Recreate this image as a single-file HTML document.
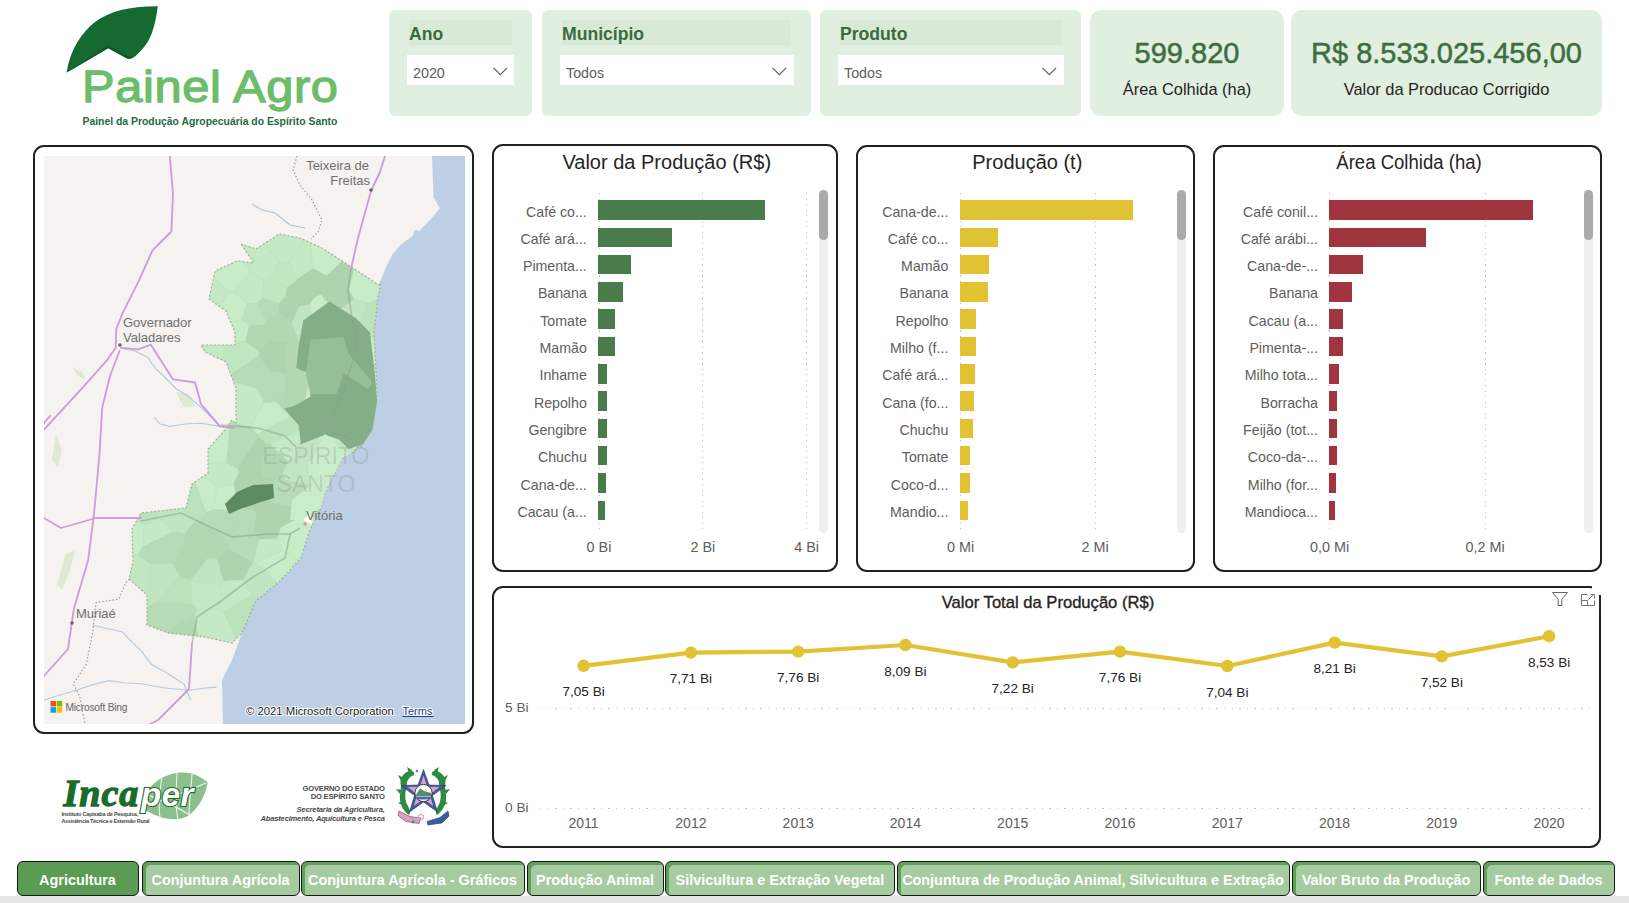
<!DOCTYPE html>
<html><head><meta charset="utf-8">
<style>
*{box-sizing:border-box;margin:0;padding:0}
html,body{width:1629px;height:903px;overflow:hidden;background:#fff}
body{font-family:"Liberation Sans",sans-serif;position:relative;color:#252423}
.a{position:absolute}
.t{position:absolute;white-space:nowrap;line-height:1}
.card{position:absolute;background:#e1efe0;border-radius:6px}
.hdr{position:absolute;background:#d8ead6}
.dd{position:absolute;background:#fff}
.ttl{font-weight:700;color:#3b6a3f;font-size:17.6px}
.ddt{color:#605e5c;font-size:14.3px}
.kpi{position:absolute;background:#e0efdf;border-radius:11px}
.kv{color:#3e6e40;font-size:29px;-webkit-text-stroke:0.5px #3e6e40}
.kl{color:#252423;font-size:16.4px}
.vis{position:absolute;border:2px solid #202020;border-radius:11px;background:#fff}
.lbl{color:#605e5c;font-size:14.2px;text-align:right}
.ax{color:#605e5c;font-size:13.6px;text-align:center}
.bt{color:#252423;font-size:20px}
.tab{position:absolute;top:861px;height:35px;border:1.6px solid #141c14;border-radius:6px;background:#a7cba0;box-shadow:inset 3px 3px 0 0 #5f9f5a;color:#fff;font-weight:700;font-size:14.4px;text-align:center;line-height:37px;white-space:nowrap;overflow:hidden}
.tab.on{background:#5a9c53;box-shadow:none}
</style></head>
<body>
<!-- ========== LOGO ========== -->
<svg class="a" style="left:0;top:0" width="350" height="140" viewBox="0 0 350 140">
  <path d="M66.5,72.7 C70,50 82,32 95,22 C110,11 130,6 157.8,6.2 C155,28 150,42 141,50.5 C136,56 132,60 127,58.5 L108.2,48.3 Z" fill="#156a31"/>
  <path d="M66.5,72.7 L108.2,44.8 L131,57.5 C130,59.5 129,59.5 127,58.5 L108.2,48.3 Z" fill="#0e5726" opacity="0.8"/>
</svg>
<div class="t" id="logoT" style="left:82.3px;top:63.5px;font-size:45px;color:#6cbd6a;-webkit-text-stroke:1.3px #6cbd6a;letter-spacing:0.6px;transform:scaleX(1.084);transform-origin:left">Painel Agro</div>
<div class="t" id="logoS" style="left:82.5px;top:117px;font-size:10.4px;font-weight:700;color:#236b3e">Painel da Produção Agropecuária do Espírito Santo</div>

<!-- ========== SLICERS ========== -->
<div class="card" style="left:389px;top:10px;width:143px;height:106px"></div>
<div class="hdr" style="left:409px;top:20px;width:103px;height:25px"></div>
<div class="t ttl" id="s1t" style="left:409px;top:26px">Ano</div>
<div class="dd" style="left:407px;top:55px;width:107px;height:30px"></div>
<div class="t ddt" id="s1v" style="left:413px;top:66px">2020</div>
<svg class="a" style="left:493px;top:67px" width="15" height="9"><path d="M0.5,0.8 L7.3,7.6 L14.1,0.8" fill="none" stroke="#605e5c" stroke-width="1.2"/></svg>

<div class="card" style="left:542px;top:10px;width:269px;height:106px"></div>
<div class="hdr" style="left:562px;top:20px;width:229px;height:25px"></div>
<div class="t ttl" id="s2t" style="left:562px;top:26px">Município</div>
<div class="dd" style="left:560px;top:55px;width:234px;height:30px"></div>
<div class="t ddt" id="s2v" style="left:566px;top:66px">Todos</div>
<svg class="a" style="left:772px;top:67px" width="15" height="9"><path d="M0.5,0.8 L7.3,7.6 L14.1,0.8" fill="none" stroke="#605e5c" stroke-width="1.2"/></svg>

<div class="card" style="left:820px;top:10px;width:261px;height:106px"></div>
<div class="hdr" style="left:840px;top:20px;width:221px;height:25px"></div>
<div class="t ttl" id="s3t" style="left:840px;top:26px">Produto</div>
<div class="dd" style="left:838px;top:55px;width:226px;height:30px"></div>
<div class="t ddt" id="s3v" style="left:844px;top:66px">Todos</div>
<svg class="a" style="left:1042px;top:67px" width="15" height="9"><path d="M0.5,0.8 L7.3,7.6 L14.1,0.8" fill="none" stroke="#605e5c" stroke-width="1.2"/></svg>

<!-- ========== KPIs ========== -->
<div class="kpi" style="left:1090px;top:10px;width:194px;height:106px"></div>
<div class="t kv" id="k1v" style="left:1090px;width:194px;text-align:center;top:39px">599.820</div>
<div class="t kl" id="k1l" style="left:1090px;width:194px;text-align:center;top:80.5px">Área Colhida (ha)</div>
<div class="kpi" style="left:1291px;top:10px;width:311px;height:106px"></div>
<div class="t kv" id="k2v" style="left:1291px;width:311px;text-align:center;top:39px">R$ 8.533.025.456,00</div>
<div class="t kl" id="k2l" style="left:1291px;width:311px;text-align:center;top:80.5px">Valor da Producao Corrigido</div>

<!-- ========== MAP ========== -->
<div class="vis" style="left:33px;top:145px;width:441px;height:589px"></div>
<svg class="a" style="left:44px;top:156px" width="421" height="568" viewBox="44 156 421 568">
  <rect x="44" y="156" width="421" height="568" fill="#f5f2ef"/>
  <!-- small vegetation patches -->
  <path d="M72,367 L82,372 L86,380 L78,376 Z" fill="#dfe8d2"/>
  <path d="M176,392 L188,394 L195,406 L184,407 Z" fill="#dfe8d2"/>
  <path d="M56,434 L62,450 L58,468 L52,460 Z" fill="#dfe8d2"/>
  <path d="M66,553 L75,551 L70,570 L62,590 L57,585 Z" fill="#dfe8d2"/>
  <!-- sea -->
  <path d="M432,156 L433.6,197.4 L440,208.6 L428.8,221.3 L419.3,230.9 L414.5,230.1 L412.9,235.7 L400.1,245.3 L392.2,254.8 L385.8,267.6 L381,280.3 L377.8,300 L374,332 L377,392 L373,424 L363,442 L350,455 L343,457 L325,492 L321,508 L309,532 L301,558 L279,582 L256,601 L242,633 L232,660 L222,680 L223,724 L465,724 L465,156 Z" fill="#bdcfe4"/>
  <!-- rivers -->
  <path d="M252,204 L262,210 L275,213 L290,225 L305,228" fill="none" stroke="#a9c3e0" stroke-width="1.2"/>
  <path d="M122.6,348.5 L135,351 L147.8,357.2 L155,368 L163.5,376 L176,388.7 L188,396 L201.2,407.6 L212,418 L220,426.4" fill="none" stroke="#b4c8e0" stroke-width="1.1"/>
  <path d="M154,417 L160,424 L169.8,426.4 L185,424 L201.2,423.3 L220,426.4" fill="none" stroke="#b4c8e0" stroke-width="1.1"/>
  <path d="M92.8,625.2 L105,628 L122.1,631.8 L132,642 L141.6,651.3 L151.4,664.3 L165,672 L183.9,683.8 L190.4,700" fill="none" stroke="#b4c8e0" stroke-width="1.1"/>
  <path d="M44,700 L60,695 L76.5,690.3 L95,684 L109.1,680.6 L125,683 L141.6,683.8 L165,688 L190.4,690.3 L205,688 L216.5,687.1" fill="none" stroke="#b4c8e0" stroke-width="1.1"/>
  <!-- state borders dotted (outside ES) -->
  <path d="M297,156 L293,170 L300,185 L312,200 L322,220 L318,232 L311,239" fill="none" stroke="#a39b93" stroke-width="1.2" stroke-dasharray="1.5 2"/>
  <path d="M129.5,579 L125.4,583 L118.8,599.2 L96.1,602.5 L92.8,631.8 L86.3,664.3 L73.3,683.8 L79.8,696.8 L85,724" fill="none" stroke="#a39b93" stroke-width="1.2" stroke-dasharray="1.5 2"/>
  <!-- ES state -->
  <path d="M241,244 L256,249 L279,234 L300,238 L322,248 L379,285 L381,281 L377.8,300 L374,332 L377,392 L373,424 L363,442 L350,455 L343,457 L325,492 L321,508 L309,532 L301,558 L279,582 L256,601 L242,633 L232,643 L205,637 L168,633 L147,625 L147,595 L129,579 L133,561 L132,529 L141,513 L186,508 L192,484 L208,473 L208,449 L224,431 L232,420 L236,424 L236,388 L226,362 L205,352 L201,345 L235,345 L235,332 L226,311 L209,299 L215,271 L237,261 L254,263 Z" fill="#c3e8c3"/>
  <!-- medium municipalities -->
  <g stroke="#a9cca9" stroke-width="0.5" stroke-opacity="0.25">
<path d="M331.4,343.6 L336.8,342.8 L342.8,331.8 L335.5,314.7 L313.5,321.9 L308.8,331.9 L331.4,343.6Z" fill="#bce2bc"/>
<path d="M190.6,581.5 L192.4,604.0 L197.0,609.6 L219.6,608.6 L221.0,584.4 L190.6,581.5Z" fill="#c4e9c4"/>
<path d="M316.9,433.9 L335.3,434.9 L345.9,409.5 L345.4,409.1 L327.3,406.6 L314.7,432.0 L316.9,433.9Z" fill="#bce2bc"/>
<path d="M224.2,345.0 L201.0,345.0 L205.0,352.0 L222.5,360.3 L224.2,345.0Z" fill="#c4e9c4"/>
<path d="M255.0,476.8 L261.6,475.8 L265.9,442.9 L257.9,436.3 L237.6,468.5 L239.2,471.8 L255.0,476.8Z" fill="#aed4ae"/>
<path d="M304.3,240.0 L300.0,238.0 L279.0,234.0 L266.9,241.9 L266.3,246.4 L279.0,262.5 L289.3,262.9 L304.3,240.0Z" fill="#c4e9c4"/>
<path d="M235.8,639.2 L242.0,633.0 L256.0,601.0 L259.8,597.8 L251.8,594.7 L223.7,612.3 L235.8,639.2Z" fill="#bce2bc"/>
<path d="M269.2,443.9 L287.6,461.1 L297.3,456.9 L301.4,431.9 L299.5,430.3 L269.2,443.9Z" fill="#c4e9c4"/>
<path d="M249.0,325.3 L245.3,341.5 L258.8,351.5 L270.6,340.0 L264.1,324.8 L249.0,325.3Z" fill="#b2d8b2"/>
<path d="M296.3,335.7 L308.8,331.9 L313.5,321.9 L309.3,304.3 L299.3,306.3 L291.6,322.3 L296.3,335.7Z" fill="#c0e5c0"/>
<path d="M354.1,298.9 L349.1,290.0 L326.9,286.7 L321.3,295.1 L335.7,312.8 L354.1,298.9Z" fill="#aed4ae"/>
<path d="M255.6,562.2 L253.2,561.4 L253.2,561.4 L242.7,579.8 L251.8,594.7 L259.8,597.8 L277.9,582.9 L255.6,562.2Z" fill="#c0e5c0"/>
<path d="M302.1,516.0 L280.8,527.2 L276.8,538.4 L283.0,550.6 L298.6,560.6 L301.0,558.0 L309.0,532.0 L316.1,517.7 L302.1,516.0Z" fill="#c8ebc8"/>
<path d="M216.9,487.9 L233.7,483.8 L239.2,471.8 L237.6,468.5 L226.2,462.2 L208.0,463.0 L208.0,473.0 L204.3,475.6 L216.9,487.9Z" fill="#c4e9c4"/>
<path d="M228.5,291.8 L213.5,278.1 L209.0,299.0 L220.1,306.9 L228.5,291.8Z" fill="#c4e9c4"/>
<path d="M326.0,405.5 L327.3,406.6 L345.4,409.1 L348.1,388.1 L335.0,375.3 L331.7,375.9 L325.5,382.9 L326.0,405.5Z" fill="#c0e5c0"/>
<path d="M282.0,476.7 L273.3,479.5 L270.1,502.4 L290.8,506.5 L286.2,480.2 L282.0,476.7Z" fill="#b6dbb6"/>
<path d="M299.3,306.3 L309.3,304.3 L315.7,296.3 L297.0,279.9 L286.6,287.9 L285.9,296.0 L299.3,306.3Z" fill="#aed4ae"/>
<path d="M241.9,319.6 L230.7,322.0 L235.0,332.0 L235.0,342.5 L245.3,341.5 L249.0,325.3 L241.9,319.6Z" fill="#c8ebc8"/>
<path d="M228.5,291.8 L234.3,291.1 L250.0,272.5 L248.6,266.7 L240.9,261.5 L237.0,261.0 L215.0,271.0 L213.5,278.1 L228.5,291.8Z" fill="#c8ebc8"/>
<path d="M367.3,303.1 L358.7,328.5 L374.4,339.5 L374.0,332.0 L377.8,300.0 L377.8,299.7 L367.3,303.1Z" fill="#bce2bc"/>
<path d="M286.4,371.5 L303.3,371.1 L311.5,362.1 L296.0,336.2 L286.8,341.9 L286.4,371.5Z" fill="#b2d8b2"/>
<path d="M149.5,605.8 L156.5,602.6 L179.4,575.8 L172.8,563.4 L150.0,563.9 L149.5,605.8Z" fill="#c0e5c0"/>
<path d="M285.9,296.0 L286.6,287.9 L268.9,279.1 L263.4,280.0 L262.0,298.1 L279.0,303.3 L285.9,296.0Z" fill="#c1e7c1"/>
<path d="M156.5,602.6 L149.5,605.8 L147.0,608.7 L147.0,625.0 L164.9,631.8 L194.2,615.4 L197.0,609.6 L192.4,604.0 L156.5,602.6Z" fill="#b6dbb6"/>
<path d="M262.0,298.1 L256.9,303.2 L265.6,321.0 L278.3,313.4 L279.0,303.3 L262.0,298.1Z" fill="#b6dbb6"/>
<path d="M276.2,402.1 L285.8,387.8 L284.5,373.1 L271.8,372.1 L256.5,388.3 L264.1,402.6 L276.2,402.1Z" fill="#b6dbb6"/>
<path d="M200.1,519.4 L193.6,522.3 L184.5,534.1 L185.2,539.7 L208.0,557.9 L217.4,559.0 L228.1,549.1 L228.4,542.3 L200.1,519.4Z" fill="#b2d8b2"/>
<path d="M226.2,462.2 L237.6,468.5 L257.9,436.3 L257.1,434.3 L250.5,426.6 L236.0,423.5 L236.0,424.0 L235.3,423.3 L230.4,422.2 L230.3,422.3 L226.2,462.2Z" fill="#b6dbb6"/>
<path d="M375.9,369.6 L375.7,365.7 L346.6,357.6 L335.0,375.3 L348.1,388.1 L375.9,369.6Z" fill="#c0e5c0"/>
<path d="M258.1,511.6 L280.8,527.2 L302.1,516.0 L290.8,506.5 L270.1,502.4 L258.1,511.6Z" fill="#aed4ae"/>
<path d="M226.2,462.2 L230.3,422.3 L224.0,431.0 L208.0,449.0 L208.0,463.0 L226.2,462.2Z" fill="#c8ebc8"/>
<path d="M228.1,549.1 L217.4,559.0 L223.0,581.3 L242.7,579.8 L253.2,561.4 L228.1,549.1Z" fill="#aed4ae"/>
<path d="M336.0,463.8 L340.3,442.1 L335.3,434.9 L316.9,433.9 L322.4,457.6 L336.0,463.8Z" fill="#c4e9c4"/>
<path d="M365.4,435.3 L366.4,435.9 L373.0,424.0 L376.0,400.2 L347.7,410.2 L365.4,435.3Z" fill="#c8ebc8"/>
<path d="M308.9,484.9 L323.3,499.0 L325.0,492.0 L338.0,466.7 L336.0,463.8 L322.4,457.6 L307.2,461.2 L308.9,484.9Z" fill="#c8ebc8"/>
<path d="M221.0,584.4 L219.6,608.6 L223.7,612.3 L251.8,594.7 L242.7,579.8 L223.0,581.3 L221.0,584.4Z" fill="#c4e9c4"/>
<path d="M172.8,563.4 L179.4,575.8 L190.1,580.8 L208.0,557.9 L185.2,539.7 L172.8,563.4Z" fill="#b2d8b2"/>
<path d="M349.1,290.0 L353.9,268.7 L341.9,260.9 L326.8,275.7 L326.9,286.7 L349.1,290.0Z" fill="#aed4ae"/>
<path d="M265.9,442.9 L269.2,443.9 L299.5,430.3 L293.3,417.4 L290.2,416.4 L257.1,434.3 L257.9,436.3 L265.9,442.9Z" fill="#bce2bc"/>
<path d="M197.0,609.6 L194.2,615.4 L198.0,636.2 L205.0,637.0 L232.0,643.0 L235.8,639.2 L223.7,612.3 L219.6,608.6 L197.0,609.6Z" fill="#c4e9c4"/>
<path d="M233.7,483.8 L237.6,507.4 L252.4,509.4 L255.0,476.8 L239.2,471.8 L233.7,483.8Z" fill="#aed4ae"/>
<path d="M278.3,313.4 L291.6,322.3 L299.3,306.3 L285.9,296.0 L279.0,303.3 L278.3,313.4Z" fill="#aed4ae"/>
<path d="M315.7,296.3 L321.3,295.1 L326.9,286.7 L326.8,275.7 L312.9,268.3 L297.2,279.1 L297.0,279.9 L315.7,296.3Z" fill="#aed4ae"/>
<path d="M365.4,435.3 L340.3,442.1 L336.0,463.8 L338.0,466.7 L343.0,457.0 L350.0,455.0 L363.0,442.0 L366.4,435.9 L365.4,435.3Z" fill="#c0e5c0"/>
<path d="M158.2,518.0 L173.7,531.4 L184.5,534.1 L193.6,522.3 L183.8,508.2 L157.7,511.1 L158.2,518.0Z" fill="#c0e5c0"/>
<path d="M331.7,375.9 L335.0,375.3 L346.6,357.6 L336.8,342.8 L331.4,343.6 L316.4,361.2 L331.7,375.9Z" fill="#c4e9c4"/>
<path d="M142.5,547.1 L137.8,554.6 L150.0,563.9 L172.8,563.4 L185.2,539.7 L184.5,534.1 L173.7,531.4 L142.5,547.1Z" fill="#b6dbb6"/>
<path d="M342.8,331.8 L358.7,328.5 L367.3,303.1 L354.1,298.9 L335.7,312.8 L335.5,314.7 L342.8,331.8Z" fill="#c0e5c0"/>
<path d="M297.0,279.9 L297.2,279.1 L289.3,262.9 L279.0,262.5 L268.9,279.1 L286.6,287.9 L297.0,279.9Z" fill="#c1e7c1"/>
<path d="M308.9,484.9 L286.2,480.2 L290.8,506.5 L302.1,516.0 L316.1,517.7 L321.0,508.0 L323.3,499.0 L308.9,484.9Z" fill="#b6dbb6"/>
<path d="M258.8,351.5 L258.2,355.7 L271.8,372.1 L284.5,373.1 L286.4,371.5 L286.8,341.9 L270.6,340.0 L258.8,351.5Z" fill="#aed4ae"/>
<path d="M336.8,342.8 L346.6,357.6 L375.7,365.7 L374.4,339.5 L358.7,328.5 L342.8,331.8 L336.8,342.8Z" fill="#c8ebc8"/>
<path d="M217.4,559.0 L208.0,557.9 L190.1,580.8 L190.6,581.5 L221.0,584.4 L223.0,581.3 L217.4,559.0Z" fill="#c0e5c0"/>
<path d="M233.4,509.8 L212.4,509.6 L205.9,512.6 L200.1,519.4 L228.4,542.3 L232.1,537.7 L233.4,509.8Z" fill="#b6dbb6"/>
<path d="M143.9,524.8 L142.5,547.1 L173.7,531.4 L158.2,518.0 L143.9,524.8Z" fill="#c4e9c4"/>
<path d="M305.2,398.7 L309.1,381.3 L303.3,371.1 L286.4,371.5 L284.5,373.1 L285.8,387.8 L305.2,398.7Z" fill="#b2d8b2"/>
<path d="M313.5,321.9 L335.5,314.7 L335.7,312.8 L321.3,295.1 L315.7,296.3 L309.3,304.3 L313.5,321.9Z" fill="#c8ebc8"/>
<path d="M299.5,430.3 L301.4,431.9 L314.7,432.0 L327.3,406.6 L326.0,405.5 L306.2,401.1 L293.3,417.4 L299.5,430.3Z" fill="#c4e9c4"/>
<path d="M149.5,605.8 L150.0,563.9 L137.8,554.6 L132.8,555.0 L133.0,561.0 L129.0,579.0 L147.0,595.0 L147.0,608.7 L149.5,605.8Z" fill="#c1e7c1"/>
<path d="M258.1,511.6 L256.6,511.8 L253.8,531.6 L259.0,539.3 L276.8,538.4 L280.8,527.2 L258.1,511.6Z" fill="#aed4ae"/>
<path d="M345.4,409.1 L345.9,409.5 L347.7,410.2 L376.0,400.2 L377.0,392.0 L375.9,369.6 L348.1,388.1 L345.4,409.1Z" fill="#c4e9c4"/>
<path d="M349.1,290.0 L354.1,298.9 L367.3,303.1 L377.8,299.7 L381.0,281.0 L379.0,285.0 L353.9,268.7 L349.1,290.0Z" fill="#c8ebc8"/>
<path d="M250.5,426.6 L257.1,434.3 L290.2,416.4 L276.2,402.1 L264.1,402.6 L250.5,426.6Z" fill="#c8ebc8"/>
<path d="M326.8,275.7 L341.9,260.9 L322.0,248.0 L310.0,242.6 L312.9,268.3 L326.8,275.7Z" fill="#c8ebc8"/>
<path d="M248.6,266.7 L252.0,262.8 L240.9,261.5 L248.6,266.7Z" fill="#c4e9c4"/>
<path d="M266.3,246.4 L266.9,241.9 L256.0,249.0 L241.0,244.0 L253.0,261.6 L266.3,246.4Z" fill="#c4e9c4"/>
<path d="M335.3,434.9 L340.3,442.1 L365.4,435.3 L347.7,410.2 L345.9,409.5 L335.3,434.9Z" fill="#c4e9c4"/>
<path d="M194.2,615.4 L164.9,631.8 L168.0,633.0 L198.0,636.2 L194.2,615.4Z" fill="#b2d8b2"/>
<path d="M283.0,550.6 L255.6,562.2 L277.9,582.9 L279.0,582.0 L298.6,560.6 L283.0,550.6Z" fill="#c8ebc8"/>
<path d="M255.6,562.2 L283.0,550.6 L276.8,538.4 L259.0,539.3 L253.2,561.4 L255.6,562.2Z" fill="#c4e9c4"/>
<path d="M250.5,426.6 L264.1,402.6 L256.5,388.3 L233.4,381.3 L236.0,388.0 L236.0,423.5 L250.5,426.6Z" fill="#c4e9c4"/>
<path d="M235.3,423.3 L232.0,420.0 L230.4,422.2 L235.3,423.3Z" fill="#c4e9c4"/>
<path d="M307.2,461.2 L322.4,457.6 L316.9,433.9 L314.7,432.0 L301.4,431.9 L297.3,456.9 L307.2,461.2Z" fill="#c0e5c0"/>
<path d="M273.3,479.5 L282.0,476.7 L287.6,461.1 L269.2,443.9 L265.9,442.9 L261.6,475.8 L273.3,479.5Z" fill="#b2d8b2"/>
<path d="M266.3,246.4 L253.0,261.6 L254.0,263.0 L252.0,262.8 L248.6,266.7 L250.0,272.5 L263.4,280.0 L268.9,279.1 L279.0,262.5 L266.3,246.4Z" fill="#c4e9c4"/>
<path d="M265.6,321.0 L264.1,324.8 L270.6,340.0 L286.8,341.9 L296.0,336.2 L296.3,335.7 L291.6,322.3 L278.3,313.4 L265.6,321.0Z" fill="#b2d8b2"/>
<path d="M179.4,575.8 L156.5,602.6 L192.4,604.0 L190.6,581.5 L190.1,580.8 L179.4,575.8Z" fill="#bce2bc"/>
<path d="M293.3,417.4 L306.2,401.1 L305.2,398.7 L285.8,387.8 L276.2,402.1 L290.2,416.4 L293.3,417.4Z" fill="#b2d8b2"/>
<path d="M305.2,398.7 L306.2,401.1 L326.0,405.5 L325.5,382.9 L309.1,381.3 L305.2,398.7Z" fill="#c8ebc8"/>
<path d="M228.4,542.3 L228.1,549.1 L253.2,561.4 L253.2,561.4 L259.0,539.3 L253.8,531.6 L232.1,537.7 L228.4,542.3Z" fill="#b6dbb6"/>
<path d="M256.5,388.3 L271.8,372.1 L258.2,355.7 L230.8,374.4 L233.4,381.3 L256.5,388.3Z" fill="#b6dbb6"/>
<path d="M253.8,531.6 L256.6,511.8 L252.4,509.4 L237.6,507.4 L233.4,509.8 L232.1,537.7 L253.8,531.6Z" fill="#b6dbb6"/>
<path d="M308.9,484.9 L307.2,461.2 L297.3,456.9 L287.6,461.1 L282.0,476.7 L286.2,480.2 L308.9,484.9Z" fill="#c1e7c1"/>
<path d="M241.9,319.6 L246.9,303.8 L234.3,291.1 L228.5,291.8 L220.1,306.9 L226.0,311.0 L230.7,322.0 L241.9,319.6Z" fill="#c8ebc8"/>
<path d="M289.3,262.9 L297.2,279.1 L312.9,268.3 L310.0,242.6 L304.3,240.0 L289.3,262.9Z" fill="#c4e9c4"/>
<path d="M256.9,303.2 L246.9,303.8 L241.9,319.6 L249.0,325.3 L264.1,324.8 L265.6,321.0 L256.9,303.2Z" fill="#bce2bc"/>
<path d="M143.9,524.8 L158.2,518.0 L157.7,511.1 L141.0,513.0 L136.9,520.2 L143.9,524.8Z" fill="#bce2bc"/>
<path d="M195.1,481.9 L192.0,484.0 L186.0,508.0 L183.8,508.2 L193.6,522.3 L200.1,519.4 L205.9,512.6 L195.1,481.9Z" fill="#bce2bc"/>
<path d="M237.6,507.4 L233.7,483.8 L216.9,487.9 L212.4,509.6 L233.4,509.8 L237.6,507.4Z" fill="#c8ebc8"/>
<path d="M252.4,509.4 L256.6,511.8 L258.1,511.6 L270.1,502.4 L273.3,479.5 L261.6,475.8 L255.0,476.8 L252.4,509.4Z" fill="#aed4ae"/>
<path d="M303.3,371.1 L309.1,381.3 L325.5,382.9 L331.7,375.9 L316.4,361.2 L311.5,362.1 L303.3,371.1Z" fill="#bce2bc"/>
<path d="M263.4,280.0 L250.0,272.5 L234.3,291.1 L246.9,303.8 L256.9,303.2 L262.0,298.1 L263.4,280.0Z" fill="#c4e9c4"/>
<path d="M137.8,554.6 L142.5,547.1 L143.9,524.8 L136.9,520.2 L132.0,529.0 L132.8,555.0 L137.8,554.6Z" fill="#c8ebc8"/>
<path d="M216.9,487.9 L204.3,475.6 L195.1,481.9 L205.9,512.6 L212.4,509.6 L216.9,487.9Z" fill="#c8ebc8"/>
<path d="M296.0,336.2 L311.5,362.1 L316.4,361.2 L331.4,343.6 L308.8,331.9 L296.3,335.7 L296.0,336.2Z" fill="#bce2bc"/>
<path d="M258.2,355.7 L258.8,351.5 L245.3,341.5 L235.0,342.5 L235.0,345.0 L224.2,345.0 L222.5,360.3 L226.0,362.0 L230.8,374.4 L258.2,355.7Z" fill="#c1e7c1"/>
  </g>
  <path d="M241,244 L256,249 L279,234 L300,238 L322,248 L379,285 L381,281 L377.8,300 L374,332 L377,392 L373,424 L363,442 L350,455 L343,457 L325,492 L321,508 L309,532 L301,558 L279,582 L256,601 L242,633 L232,643 L205,637 L168,633 L147,625 L147,595 L129,579 L133,561 L132,529 L141,513 L186,508 L192,484 L208,473 L208,449 L224,431 L232,420 L236,424 L236,388 L226,362 L205,352 L201,345 L235,345 L235,332 L226,311 L209,299 L215,271 L237,261 L254,263 Z" fill="none" stroke="#9c9c94" stroke-width="1.2" stroke-dasharray="1.8 2.2" stroke-opacity="0.8"/>
  <!-- dark NE region -->
  <path d="M298.6,346.7 L303.3,320.5 L329.5,301.4 L355.7,318.1 L370,332.4 L374.8,372.9 L377.1,401.4 L372.4,430 L362.9,444.3 L348.6,449 L339,439.5 L324.8,434.8 L301,444.3 L298.6,425.2 L284.3,408.6 L293.8,406.2 L310.5,396.7 L308.1,372.9 L296.2,368.1 Z" fill="#84ae86"/>
  <path d="M310.5,339.5 L343.8,337.1 L348.6,353.8 L372.4,382.4 L367.6,389.5 L343.8,372.9 L336.7,394.3 L310.5,394.3 L305.7,372.9 Z" fill="#95bf95"/>
  <!-- dark small central municipality -->
  <path d="M225,504 L237,492 L253,485 L273,484 L274,498 L261,502 L240,509 L229,514 Z" fill="#5e8a60"/>
  <!-- light coastal strip near Vitoria -->
  <path d="M325,434 L350,455 L343,457 L325,492 L321,508 L305,520 L290,520 L292,500 L318,480 L312,460 Z" fill="#c9ecc9"/>
  <!-- roads -->
  <g fill="none" stroke="#cc9bdb" stroke-width="1.8" stroke-linejoin="round" stroke-linecap="round">
    <path d="M169.8,156 L173,193.7 L171.4,231.5 L152.5,250.3 L138.3,281.8 L122.6,313.2 L116.3,329 L115.7,347.8 L106.9,360.4 L81.7,388.7 L44,429.6"/>
    <path d="M119.5,351 L110,376 L102.2,407.6 L99.5,454 L94,514 L88,561 L74,608 L68,649 L44,676"/>
    <path d="M121,347.8 L138.3,349.4 L150.9,344.7 L172.9,379.3 L195,382.5 L201.2,404.4 L220,426.4 L234,428"/>
    <path d="M385,156 L380,172 L371,191 L358,238 L351,269"/>
    <path d="M44,518 L61,528 L96,518 L141,518"/>
    <path d="M192,644 L189,689 L158,720 L150,724"/>
    <path d="M44,423 L50,416"/>
  </g>
  <g fill="none" stroke="#8f9e8c" stroke-width="1.6" stroke-opacity="0.55" stroke-linejoin="round">
    <path d="M221,425 L258,428 L285,436 L296,447"/>
    <path d="M141,521 L181,513 L208,526 L232,537 L269,534 L290,534 L300,528"/>
    <path d="M290,534 L285,558 L253,577 L221,601 L197,617 L192,644"/>
    <path d="M351,269 L348,290 L352,320 L358,342 L350,370 L342,395 L330,420"/>
    <path d="M300,444 L320,428 L345,436 L362,447"/>
  </g>
  <!-- watermark -->
  <text x="316" y="464" font-family="Liberation Sans" font-size="23" fill="#8c8c8c" fill-opacity="0.28" text-anchor="middle">ESPÍRITO</text>
  <text x="316" y="492" font-family="Liberation Sans" font-size="23" fill="#8c8c8c" fill-opacity="0.28" text-anchor="middle">SANTO</text>
  <!-- cities -->
  <circle cx="371" cy="190" r="1.8" fill="#666"/>
  <circle cx="120" cy="345" r="1.8" fill="#666"/>
  <circle cx="72" cy="623" r="1.8" fill="#666"/>
  <path d="M303,520 L310,514 L312,524 Z" fill="#fff"/>
  <circle cx="305" cy="524" r="1.6" fill="#e88"/>
  <g font-family="Liberation Sans" font-size="13" fill="#6f6f6f">
    <text x="369" y="169.5" text-anchor="end">Teixeira de</text>
    <text x="370" y="185" text-anchor="end">Freitas</text>
    <text x="123" y="327">Governador</text>
    <text x="123" y="342">Valadares</text>
    <text x="306" y="520">Vitória</text>
    <text x="76" y="618">Muriaé</text>
  </g>
  <!-- bing logo -->
  <rect x="50.5" y="701" width="5.5" height="5.5" fill="#f25022"/>
  <rect x="56.7" y="701" width="5.5" height="5.5" fill="#7fba00"/>
  <rect x="50.5" y="707.2" width="5.5" height="5.5" fill="#00a4ef"/>
  <rect x="56.7" y="707.2" width="5.5" height="5.5" fill="#ffb900"/>
  <text x="65.5" y="711" font-family="Liberation Sans" font-size="10.2" fill="#666" letter-spacing="-0.2">Microsoft Bing</text>
  <text x="246" y="714.5" font-family="Liberation Sans" font-size="11.3" fill="#222" stroke="#fff" stroke-width="2" paint-order="stroke" letter-spacing="0">© 2021 Microsoft Corporation</text>
  <text x="402.5" y="714.5" font-family="Liberation Sans" font-size="11" fill="#1c3b8e" stroke="#fff" stroke-width="2" paint-order="stroke">Terms</text>
  <rect x="402.5" y="716" width="31" height="1" fill="#1c3b8e"/>
</svg>


<!--CHARTS-->
<!-- ========== BAR CHARTS ========== -->
<div class="vis" style="left:492px;top:144px;width:346px;height:428px"></div>
<div class="t bt" id="c1t" style="left:516.75px;width:300px;text-align:center;top:151.9px;">Valor da Produção (R$)</div>
<div class="a" style="left:598.5px;top:193px;width:1px;height:341px;background:repeating-linear-gradient(to bottom,#bdbdbd 0 1px,transparent 1px 5.5px)"></div>
<div class="a" style="left:702.3px;top:193px;width:1px;height:341px;background:repeating-linear-gradient(to bottom,#bdbdbd 0 1px,transparent 1px 5.5px)"></div>
<div class="a" style="left:806.1px;top:193px;width:1px;height:341px;background:repeating-linear-gradient(to bottom,#bdbdbd 0 1px,transparent 1px 5.5px)"></div>
<div class="a" style="left:598.3px;top:200.2px;width:166.4px;height:19.5px;background:#4a7b4b"></div>
<div class="t lbl" style="left:466.79999999999995px;width:120px;top:204.5px">Café co...</div>
<div class="a" style="left:598.3px;top:227.5px;width:73.7px;height:19.5px;background:#4a7b4b"></div>
<div class="t lbl" style="left:466.79999999999995px;width:120px;top:231.8px">Café ará...</div>
<div class="a" style="left:598.3px;top:254.8px;width:32.5px;height:19.5px;background:#4a7b4b"></div>
<div class="t lbl" style="left:466.79999999999995px;width:120px;top:259.1px">Pimenta...</div>
<div class="a" style="left:598.3px;top:282.1px;width:24.7px;height:19.5px;background:#4a7b4b"></div>
<div class="t lbl" style="left:466.79999999999995px;width:120px;top:286.4px">Banana</div>
<div class="a" style="left:598.3px;top:309.4px;width:17.1px;height:19.5px;background:#4a7b4b"></div>
<div class="t lbl" style="left:466.79999999999995px;width:120px;top:313.7px">Tomate</div>
<div class="a" style="left:598.3px;top:336.7px;width:17.1px;height:19.5px;background:#4a7b4b"></div>
<div class="t lbl" style="left:466.79999999999995px;width:120px;top:341.0px">Mamão</div>
<div class="a" style="left:598.3px;top:364.0px;width:9.2px;height:19.5px;background:#4a7b4b"></div>
<div class="t lbl" style="left:466.79999999999995px;width:120px;top:368.3px">Inhame</div>
<div class="a" style="left:598.3px;top:391.3px;width:8.7px;height:19.5px;background:#4a7b4b"></div>
<div class="t lbl" style="left:466.79999999999995px;width:120px;top:395.6px">Repolho</div>
<div class="a" style="left:598.3px;top:418.6px;width:8.7px;height:19.5px;background:#4a7b4b"></div>
<div class="t lbl" style="left:466.79999999999995px;width:120px;top:422.9px">Gengibre</div>
<div class="a" style="left:598.3px;top:445.9px;width:8.3px;height:19.5px;background:#4a7b4b"></div>
<div class="t lbl" style="left:466.79999999999995px;width:120px;top:450.2px">Chuchu</div>
<div class="a" style="left:598.3px;top:473.2px;width:7.9px;height:19.5px;background:#4a7b4b"></div>
<div class="t lbl" style="left:466.79999999999995px;width:120px;top:477.5px">Cana-de...</div>
<div class="a" style="left:598.3px;top:500.5px;width:7.1px;height:19.5px;background:#4a7b4b"></div>
<div class="t lbl" style="left:466.79999999999995px;width:120px;top:504.8px">Cacau (a...</div>
<div class="t ax" style="left:559px;width:80px;top:539.8px;font-size:14.4px">0 Bi</div>
<div class="t ax" style="left:662.8px;width:80px;top:539.8px;font-size:14.4px">2 Bi</div>
<div class="t ax" style="left:766.6px;width:80px;top:539.8px;font-size:14.4px">4 Bi</div>
<div class="a" style="left:819px;top:190px;width:9px;height:343px;border-radius:4.5px;background:#efefef"></div>
<div class="a" style="left:819px;top:190px;width:9px;height:50px;border-radius:4.5px;background:#aaaaaa"></div>
<div class="vis" style="left:856px;top:145px;width:339px;height:427px"></div>
<div class="t bt" id="c2t" style="left:877.3px;width:300px;text-align:center;top:151.9px;">Produção (t)</div>
<div class="a" style="left:960.0px;top:193px;width:1px;height:341px;background:repeating-linear-gradient(to bottom,#bdbdbd 0 1px,transparent 1px 5.5px)"></div>
<div class="a" style="left:1094.5px;top:193px;width:1px;height:341px;background:repeating-linear-gradient(to bottom,#bdbdbd 0 1px,transparent 1px 5.5px)"></div>
<div class="a" style="left:960.1px;top:200.2px;width:172.9px;height:19.5px;background:#e0c232"></div>
<div class="t lbl" style="left:828.4px;width:120px;top:204.5px">Cana-de...</div>
<div class="a" style="left:960.1px;top:227.5px;width:37.9px;height:19.5px;background:#e0c232"></div>
<div class="t lbl" style="left:828.4px;width:120px;top:231.8px">Café co...</div>
<div class="a" style="left:960.1px;top:254.8px;width:29.2px;height:19.5px;background:#e0c232"></div>
<div class="t lbl" style="left:828.4px;width:120px;top:259.1px">Mamão</div>
<div class="a" style="left:960.1px;top:282.1px;width:27.8px;height:19.5px;background:#e0c232"></div>
<div class="t lbl" style="left:828.4px;width:120px;top:286.4px">Banana</div>
<div class="a" style="left:960.1px;top:309.4px;width:16.3px;height:19.5px;background:#e0c232"></div>
<div class="t lbl" style="left:828.4px;width:120px;top:313.7px">Repolho</div>
<div class="a" style="left:960.1px;top:336.7px;width:16.1px;height:19.5px;background:#e0c232"></div>
<div class="t lbl" style="left:828.4px;width:120px;top:341.0px">Milho (f...</div>
<div class="a" style="left:960.1px;top:364.0px;width:14.6px;height:19.5px;background:#e0c232"></div>
<div class="t lbl" style="left:828.4px;width:120px;top:368.3px">Café ará...</div>
<div class="a" style="left:960.1px;top:391.3px;width:13.6px;height:19.5px;background:#e0c232"></div>
<div class="t lbl" style="left:828.4px;width:120px;top:395.6px">Cana (fo...</div>
<div class="a" style="left:960.1px;top:418.6px;width:12.9px;height:19.5px;background:#e0c232"></div>
<div class="t lbl" style="left:828.4px;width:120px;top:422.9px">Chuchu</div>
<div class="a" style="left:960.1px;top:445.9px;width:9.7px;height:19.5px;background:#e0c232"></div>
<div class="t lbl" style="left:828.4px;width:120px;top:450.2px">Tomate</div>
<div class="a" style="left:960.1px;top:473.2px;width:9.7px;height:19.5px;background:#e0c232"></div>
<div class="t lbl" style="left:828.4px;width:120px;top:477.5px">Coco-d...</div>
<div class="a" style="left:960.1px;top:500.5px;width:8.4px;height:19.5px;background:#e0c232"></div>
<div class="t lbl" style="left:828.4px;width:120px;top:504.8px">Mandio...</div>
<div class="t ax" style="left:920.5px;width:80px;top:539.8px;font-size:14.4px">0 Mi</div>
<div class="t ax" style="left:1055px;width:80px;top:539.8px;font-size:14.4px">2 Mi</div>
<div class="a" style="left:1177px;top:190px;width:9px;height:343px;border-radius:4.5px;background:#efefef"></div>
<div class="a" style="left:1177px;top:190px;width:9px;height:50px;border-radius:4.5px;background:#aaaaaa"></div>
<div class="vis" style="left:1213px;top:145px;width:389px;height:427px"></div>
<div class="t bt" id="c3t" style="left:1259.3px;width:300px;text-align:center;top:151.9px; transform:scaleX(0.928);">Área Colhida (ha)</div>
<div class="a" style="left:1329.0px;top:193px;width:1px;height:341px;background:repeating-linear-gradient(to bottom,#bdbdbd 0 1px,transparent 1px 5.5px)"></div>
<div class="a" style="left:1484.7px;top:193px;width:1px;height:341px;background:repeating-linear-gradient(to bottom,#bdbdbd 0 1px,transparent 1px 5.5px)"></div>
<div class="a" style="left:1329px;top:200.2px;width:203.8px;height:19.5px;background:#a0343f"></div>
<div class="t lbl" style="left:1198px;width:120px;top:204.5px">Café conil...</div>
<div class="a" style="left:1329px;top:227.5px;width:97.3px;height:19.5px;background:#a0343f"></div>
<div class="t lbl" style="left:1198px;width:120px;top:231.8px">Café arábi...</div>
<div class="a" style="left:1329px;top:254.8px;width:33.8px;height:19.5px;background:#a0343f"></div>
<div class="t lbl" style="left:1198px;width:120px;top:259.1px">Cana-de-...</div>
<div class="a" style="left:1329px;top:282.1px;width:22.5px;height:19.5px;background:#a0343f"></div>
<div class="t lbl" style="left:1198px;width:120px;top:286.4px">Banana</div>
<div class="a" style="left:1329px;top:309.4px;width:13.7px;height:19.5px;background:#a0343f"></div>
<div class="t lbl" style="left:1198px;width:120px;top:313.7px">Cacau (a...</div>
<div class="a" style="left:1329px;top:336.7px;width:13.5px;height:19.5px;background:#a0343f"></div>
<div class="t lbl" style="left:1198px;width:120px;top:341.0px">Pimenta-...</div>
<div class="a" style="left:1329px;top:364.0px;width:10.0px;height:19.5px;background:#a0343f"></div>
<div class="t lbl" style="left:1198px;width:120px;top:368.3px">Milho tota...</div>
<div class="a" style="left:1329px;top:391.3px;width:8.0px;height:19.5px;background:#a0343f"></div>
<div class="t lbl" style="left:1198px;width:120px;top:395.6px">Borracha</div>
<div class="a" style="left:1329px;top:418.6px;width:8.0px;height:19.5px;background:#a0343f"></div>
<div class="t lbl" style="left:1198px;width:120px;top:422.9px">Feijão (tot...</div>
<div class="a" style="left:1329px;top:445.9px;width:7.5px;height:19.5px;background:#a0343f"></div>
<div class="t lbl" style="left:1198px;width:120px;top:450.2px">Coco-da-...</div>
<div class="a" style="left:1329px;top:473.2px;width:7.0px;height:19.5px;background:#a0343f"></div>
<div class="t lbl" style="left:1198px;width:120px;top:477.5px">Milho (for...</div>
<div class="a" style="left:1329px;top:500.5px;width:6.0px;height:19.5px;background:#a0343f"></div>
<div class="t lbl" style="left:1198px;width:120px;top:504.8px">Mandioca...</div>
<div class="t ax" style="left:1289.5px;width:80px;top:539.8px;font-size:14.4px">0,0 Mi</div>
<div class="t ax" style="left:1445.2px;width:80px;top:539.8px;font-size:14.4px">0,2 Mi</div>
<div class="a" style="left:1584px;top:190px;width:9px;height:343px;border-radius:4.5px;background:#efefef"></div>
<div class="a" style="left:1584px;top:190px;width:9px;height:50px;border-radius:4.5px;background:#aaaaaa"></div>
<!--/CHARTS-->

<!--LINE-->
<!-- ========== LINE CHART ========== -->
<div class="vis" style="left:492px;top:586px;width:1109px;height:262px"></div>
<div class="a" style="left:1592px;top:583px;width:12px;height:12px;background:#fff"></div>
<div class="a" style="left:1599.2px;top:595px;width:1.8px;height:20px;background:#252423"></div>
<div class="t" id="lt" style="left:848px;width:400px;text-align:center;top:594.9px;font-size:16.6px;color:#252423;-webkit-text-stroke:0.35px #252423">Valor Total da Produção (R$)</div>
<div class="a" style="left:540px;top:707.5px;width:1053px;height:1.2px;background:repeating-linear-gradient(to right,#c2c2c2 0 1.4px,transparent 1.4px 7.6px)"></div>
<div class="a" style="left:540px;top:807.5px;width:1053px;height:1.2px;background:repeating-linear-gradient(to right,#c2c2c2 0 1.4px,transparent 1.4px 7.6px)"></div>
<div class="t ax" style="left:480px;width:48.5px;text-align:right;top:701.0px">5 Bi</div>
<div class="t ax" style="left:480px;width:48.5px;text-align:right;top:801.2px">0 Bi</div>
<div class="t ax" style="left:543.6px;width:80px;top:816.0px;font-size:14px">2011</div>
<div class="t ax" style="left:650.9px;width:80px;top:816.0px;font-size:14px">2012</div>
<div class="t ax" style="left:758.2px;width:80px;top:816.0px;font-size:14px">2013</div>
<div class="t ax" style="left:865.4px;width:80px;top:816.0px;font-size:14px">2014</div>
<div class="t ax" style="left:972.7px;width:80px;top:816.0px;font-size:14px">2015</div>
<div class="t ax" style="left:1080.0px;width:80px;top:816.0px;font-size:14px">2016</div>
<div class="t ax" style="left:1187.3px;width:80px;top:816.0px;font-size:14px">2017</div>
<div class="t ax" style="left:1294.6px;width:80px;top:816.0px;font-size:14px">2018</div>
<div class="t ax" style="left:1401.8px;width:80px;top:816.0px;font-size:14px">2019</div>
<div class="t ax" style="left:1509.1px;width:80px;top:816.0px;font-size:14px">2020</div>
<svg class="a" style="left:492px;top:586px" width="1109" height="262" viewBox="492 586 1109 262">
<polyline points="583.6,665.8 690.9,652.6 798.2,651.6 905.4,645.0 1012.7,662.4 1120.0,651.6 1227.3,666.0 1334.6,642.6 1441.8,656.4 1549.1,636.2" fill="none" stroke="#e0c232" stroke-width="4.2" stroke-linejoin="round"/>
<circle cx="583.6" cy="665.8" r="6.2" fill="#e0c232"/>
<circle cx="690.9" cy="652.6" r="6.2" fill="#e0c232"/>
<circle cx="798.2" cy="651.6" r="6.2" fill="#e0c232"/>
<circle cx="905.4" cy="645.0" r="6.2" fill="#e0c232"/>
<circle cx="1012.7" cy="662.4" r="6.2" fill="#e0c232"/>
<circle cx="1120.0" cy="651.6" r="6.2" fill="#e0c232"/>
<circle cx="1227.3" cy="666.0" r="6.2" fill="#e0c232"/>
<circle cx="1334.6" cy="642.6" r="6.2" fill="#e0c232"/>
<circle cx="1441.8" cy="656.4" r="6.2" fill="#e0c232"/>
<circle cx="1549.1" cy="636.2" r="6.2" fill="#e0c232"/>
</svg>
<div class="t" style="left:543.6px;width:80px;text-align:center;top:685.3px;font-size:13.6px;color:#252423">7,05 Bi</div>
<div class="t" style="left:650.9px;width:80px;text-align:center;top:672.1px;font-size:13.6px;color:#252423">7,71 Bi</div>
<div class="t" style="left:758.2px;width:80px;text-align:center;top:671.1px;font-size:13.6px;color:#252423">7,76 Bi</div>
<div class="t" style="left:865.4px;width:80px;text-align:center;top:664.5px;font-size:13.6px;color:#252423">8,09 Bi</div>
<div class="t" style="left:972.7px;width:80px;text-align:center;top:681.9px;font-size:13.6px;color:#252423">7,22 Bi</div>
<div class="t" style="left:1080.0px;width:80px;text-align:center;top:671.1px;font-size:13.6px;color:#252423">7,76 Bi</div>
<div class="t" style="left:1187.3px;width:80px;text-align:center;top:685.5px;font-size:13.6px;color:#252423">7,04 Bi</div>
<div class="t" style="left:1294.6px;width:80px;text-align:center;top:662.1px;font-size:13.6px;color:#252423">8,21 Bi</div>
<div class="t" style="left:1401.8px;width:80px;text-align:center;top:675.9px;font-size:13.6px;color:#252423">7,52 Bi</div>
<div class="t" style="left:1509.1px;width:80px;text-align:center;top:655.7px;font-size:13.6px;color:#252423">8,53 Bi</div>
<svg class="a" style="left:1550px;top:590px" width="50" height="18" viewBox="1550 590 50 18">
<path d="M1552.5,592.5 L1567.5,592.5 L1561.8,599.2 L1561.8,605.5 L1558.2,605.5 L1558.2,599.2 Z" fill="none" stroke="#666" stroke-width="1"/>
<path d="M1587.5,594.5 L1581.5,594.5 L1581.5,605.5 L1594.5,605.5 L1594.5,600.5" fill="none" stroke="#777" stroke-width="1"/>
<path d="M1581.5,600.5 L1587.5,600.5 L1587.5,605.5" fill="none" stroke="#777" stroke-width="1"/>
<path d="M1588.5,599.5 L1594,594 M1590.5,594.5 L1594.5,594.5 L1594.5,598.5" fill="none" stroke="#777" stroke-width="1"/>
</svg>
<!--/LINE-->

<!--LOGOS-->
<!-- ========== BOTTOM LOGOS ========== -->
<svg class="a" style="left:50px;top:760px" width="170" height="70" viewBox="50 760 170 70">
  <path d="M140.5,807.2 C143,792 156,776 177.8,772.8 C190,771 201,776 207.7,782.6 C205,797 199,808 188,816 C176,822 160,820 140.5,807.2 Z" fill="#8dbf8e"/>
  <g fill="none" stroke="#e9f4e9" stroke-width="1.1">
    <path d="M144,806 C165,800 185,792 206,783"/>
    <path d="M162,777 C160,790 158,805 160,818"/>
    <path d="M177,773 C176,788 175,805 178,820"/>
    <path d="M192,774 C191,790 189,805 189,815"/>
    <path d="M148,795 C160,800 172,804 190,815"/>
  </g>
  <text x="63.5" y="805.7" font-family="Liberation Serif" font-weight="700" font-style="italic" font-size="38" fill="#1b6b2d" stroke="#1b6b2d" stroke-width="1.3" letter-spacing="1">Inca</text>
  <text x="141" y="805.7" font-family="Liberation Sans" font-weight="700" font-style="italic" font-size="33" fill="#fff" stroke="#1b6b2d" stroke-width="2.2" paint-order="stroke" letter-spacing="0.5">per</text>
  <text x="61.4" y="815.8" font-family="Liberation Sans" font-size="5.6" font-weight="700" fill="#4a4a4a" letter-spacing="-0.25">Instituto Capixaba de Pesquisa,</text>
  <text x="61.4" y="823.2" font-family="Liberation Sans" font-size="5.5" font-weight="700" fill="#4a4a4a" letter-spacing="-0.3">Assistência Técnica e Extensão Rural</text>
</svg>
<svg class="a" style="left:250px;top:760px" width="210" height="70" viewBox="250 760 210 70">
  <g font-family="Liberation Sans" fill="#4a4a4a" text-anchor="end">
    <text x="384.7" y="790.5" font-size="7.6" font-weight="700" letter-spacing="-0.2">GOVERNO DO ESTADO</text>
    <text x="384.7" y="798.9" font-size="7.6" font-weight="700" letter-spacing="-0.2">DO ESPÍRITO SANTO</text>
    <text x="384.7" y="811.6" font-size="7.6" font-style="italic" font-weight="700" letter-spacing="-0.15">Secretaria da Agricultura,</text>
    <text x="384.7" y="820.6" font-size="7.6" font-style="italic" font-weight="700" letter-spacing="-0.2">Abastecimento, Aquicultura e Pesca</text>
  </g>
  <!-- coat of arms -->
  <g>
    <path d="M401,786 C399,779 403,773 409,771 C412,770 415,772 414,775 C409,777 406,781 407,786 C405,792 404,800 408,806 C410,810 411,813 409,815 C403,811 399,803 400,795 Z" fill="#2e8a3c"/>
    <path d="M404,778 L398,775 L401,781 Z M402,790 L396,789 L400,794 Z M403,801 L398,803 L404,806 Z M409,773 L407,767 L412,770 Z" fill="#2e8a3c"/>
    <path d="M445,786 C447,779 443,773 437,771 C434,770 431,772 432,775 C437,777 440,781 439,786 C441,792 442,800 438,806 C436,810 435,813 437,815 C443,811 447,803 446,795 Z" fill="#2e8a3c"/>
    <path d="M442,778 L448,775 L445,781 Z M444,790 L450,789 L446,794 Z M443,801 L448,803 L442,806 Z M437,773 L439,767 L434,770 Z" fill="#2e8a3c"/>
    <path d="M423.5,769.5 L429,785 L446,785.5 L432.5,795.5 L437.5,812 L423.5,802 L409.5,812 L414.5,795.5 L401,785.5 L418,785 Z" fill="#3d5c9e" stroke="#223a70" stroke-width="0.6"/>
    <path d="M423.5,775.5 L427.2,786.8 L439.5,787 L429.8,794.5 L433.2,806 L423.5,799 L413.8,806 L417.2,794.5 L407.5,787 L419.8,786.8 Z" fill="#dba3c3"/>
    <circle cx="423.5" cy="793" r="8.6" fill="#fff" stroke="#333" stroke-width="0.9"/>
    <path d="M416,795 L420,788.5 L424,791 L431,793 L431,796 L416,796 Z" fill="#5a8a6a"/>
    <path d="M416,796.5 L431,796.5 L429.5,799.5 L417.5,799.5 Z" fill="#4a6ab0"/>
    <path d="M399,811 L410,816.5 L421,818 L419,823.5 L406,821.5 L398,815.5 Z" fill="#d9a0c0" stroke="#7a3a5a" stroke-width="0.6"/>
    <path d="M448,811 L440,817.5 L427,821.5 L428,825 L442,823 L449,816 Z" fill="#3d5c9e" stroke="#223a70" stroke-width="0.6"/>
    <circle cx="421" cy="817" r="2.5" fill="none" stroke="#d9a0c0" stroke-width="1.2"/>
    <circle cx="413" cy="822" r="1.4" fill="#4a7ac0"/>
    <circle cx="402" cy="790" r="1.2" fill="#4a7ac0"/>
    <circle cx="417" cy="771" r="1.2" fill="#4a7ac0"/>
  </g>
</svg>

<!--/LOGOS-->

<!-- ========== TABS ========== -->
<div class="a" style="left:0;top:896px;width:1629px;height:7px;background:#e6e6e6"></div>
<div class="tab on" style="left:16.5px;width:122px">Agricultura</div>
<div class="tab" style="left:141.5px;width:158px">Conjuntura Agrícola</div>
<div class="tab" style="left:300.5px;width:224px">Conjuntura Agrícola - Gráficos</div>
<div class="tab" style="left:526.5px;width:137px">Produção Animal</div>
<div class="tab" style="left:665px;width:230px">Silvicultura e Extração Vegetal</div>
<div class="tab" style="left:896.5px;width:393px">Conjuntura de Produção Animal, Silvicultura e Extração</div>
<div class="tab" style="left:1291.5px;width:189px">Valor Bruto da Produção</div>
<div class="tab" style="left:1482.5px;width:132px">Fonte de Dados</div>
</body></html>
